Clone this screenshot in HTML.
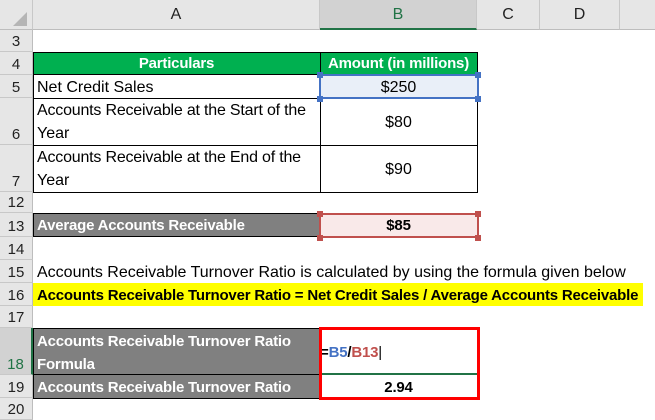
<!DOCTYPE html><html><head><style>
body{margin:0;width:655px;height:420px;overflow:hidden;background:#fff;font-family:"Liberation Sans",sans-serif;position:relative}
div{position:absolute;box-sizing:border-box}
.t{white-space:nowrap;font-size:16px;letter-spacing:0;color:#000;line-height:24px}
.b{font-weight:bold;font-size:15px;letter-spacing:-0.2px}
.rh{left:0;width:33px;background:#e6e6e6;border-bottom:1px solid #c8c8c8;border-right:1px solid #bdbdbd;font-size:15px;color:#222;text-align:center;display:flex;align-items:flex-end;justify-content:center;padding-bottom:1px}
.ch{top:0;height:30px;background:#e6e6e6;border-right:1px solid #c8c8c8;border-bottom:1px solid #bdbdbd;font-size:16px;color:#222;text-align:center;line-height:30px}
.h{width:6px;height:6px}
</style></head><body>
<div class="ch" style="left:0;width:33px"><svg width="33" height="30"><polygon points="27,12 27,26 13,26" fill="#b5b5b5"/></svg></div>
<div class="ch" style="left:33px;width:287px">A</div>
<div class="ch" style="left:320px;width:157px;background:#d2d2d2;color:#217346;border-bottom:2px solid #217346">B</div>
<div class="ch" style="left:477px;width:63px">C</div>
<div class="ch" style="left:540px;width:80px">D</div>
<div class="ch" style="left:620px;width:35px;border-right:none"></div>

<div class="rh" style="top:30px;height:22px">3</div>
<div class="rh" style="top:52px;height:23px">4</div>
<div class="rh" style="top:75px;height:23px">5</div>
<div class="rh" style="top:98px;height:47px">6</div>
<div class="rh" style="top:145px;height:47px">7</div>
<div class="rh" style="top:192px;height:21px">12</div>
<div class="rh" style="top:213px;height:24px">13</div>
<div class="rh" style="top:237px;height:23px">14</div>
<div class="rh" style="top:260px;height:23px">15</div>
<div class="rh" style="top:283px;height:23px">16</div>
<div class="rh" style="top:306px;height:22px">17</div>
<div class="rh" style="top:328px;height:47px;color:#217346;background:#d2d2d2;border-right:2px solid #217346">18</div>
<div class="rh" style="top:375px;height:23px">19</div>
<div class="rh" style="top:398px;height:22px">20</div>

<div style="left:33px;top:52px;width:288px;height:141px;border:1px solid #000"></div>
<div style="left:320px;top:52px;width:158px;height:141px;border:1px solid #000"></div>
<div style="left:33px;top:52px;width:445px;height:23px;background:#00b050;border:1px solid #000"></div>
<div style="left:320px;top:52px;width:1px;height:23px;background:#000"></div>
<div class="t b" style="left:33px;top:52px;width:287px;text-align:center;color:#fff">Particulars</div>
<div class="t b" style="left:320px;top:52px;width:157px;text-align:center;color:#fff;letter-spacing:-0.2px">Amount (in millions)</div>
<div style="left:33px;top:98px;width:445px;height:1px;background:#000"></div>
<div style="left:33px;top:145px;width:445px;height:1px;background:#000"></div>
<div class="t" style="left:37px;top:76px">Net Credit Sales</div>
<div style="left:319px;top:74px;width:160px;height:25px;background:#e9eff8;border:2px solid #4472c4"></div>
<div class="h" style="left:317px;top:72px;background:#4472c4"></div><div class="h" style="left:475px;top:72px;background:#4472c4"></div>
<div class="h" style="left:317px;top:96px;background:#4472c4"></div><div class="h" style="left:475px;top:96px;background:#4472c4"></div>
<div class="t" style="left:320px;top:76px;width:157px;text-align:center">$250</div>
<div class="t" style="left:37px;top:99px;letter-spacing:-0.2px">Accounts Receivable at the Start of the</div>
<div class="t" style="left:37px;top:122px">Year</div>
<div class="t" style="left:320px;top:111px;width:157px;text-align:center">$80</div>
<div class="t" style="left:37px;top:146px;letter-spacing:-0.2px">Accounts Receivable at the End of the</div>
<div class="t" style="left:37px;top:169px">Year</div>
<div class="t" style="left:320px;top:158px;width:157px;text-align:center">$90</div>

<div style="left:33px;top:213px;width:288px;height:24px;background:#808080;border:1px solid #000"></div>
<div class="t b" style="left:37px;top:214px;color:#fff">Average Accounts Receivable</div>
<div style="left:319px;top:213px;width:160px;height:25px;background:#f9e9e9;border:2px solid #c0504d"></div>
<div class="h" style="left:317px;top:211px;background:#c0504d"></div><div class="h" style="left:475px;top:211px;background:#c0504d"></div>
<div class="h" style="left:317px;top:235px;background:#c0504d"></div><div class="h" style="left:475px;top:235px;background:#c0504d"></div>
<div class="t b" style="left:320px;top:214px;width:157px;text-align:center">$85</div>

<div class="t" style="left:37px;top:261px">Accounts Receivable Turnover Ratio is calculated by using the formula given below</div>
<div style="left:33px;top:283px;width:610px;height:23px;background:#ffff00"></div>
<div class="t b" style="left:37px;top:284px">Accounts Receivable Turnover Ratio = Net Credit Sales / Average Accounts Receivable</div>

<div style="left:33px;top:328px;width:288px;height:71px;background:#808080;border:1px solid #000"></div>
<div style="left:33px;top:374px;width:288px;height:1px;background:#000"></div>
<div class="t b" style="left:37px;top:330px;color:#fff">Accounts Receivable Turnover Ratio</div>
<div class="t b" style="left:37px;top:353px;color:#fff">Formula</div>
<div class="t b" style="left:37px;top:376px;color:#fff">Accounts Receivable Turnover Ratio</div>
<div style="left:322px;top:373px;width:155px;height:2px;background:#217346"></div>
<div class="t b" style="left:320px;top:341px">=<span style="color:#4472c4">B5</span>/<span style="color:#c0504d">B13</span><span style="font-weight:normal">|</span></div>
<div class="t b" style="left:320px;top:376px;width:157px;text-align:center">2.94</div>
<div style="left:319px;top:327px;width:161px;height:73px;border:3px solid #ff0000"></div>
</body></html>
